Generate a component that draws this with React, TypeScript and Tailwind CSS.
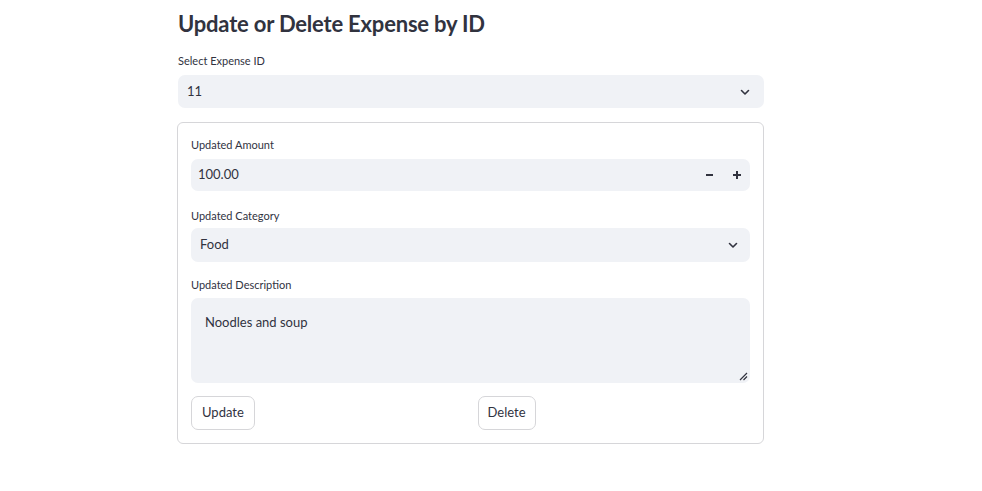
import React from "react";

const Chevron = () => (
  <svg width="12" height="12" viewBox="0 0 24 24" fill="none" stroke="#31333F" strokeWidth="3.2" strokeLinecap="round" strokeLinejoin="round">
    <path d="M5 9l7 7 7-7" />
  </svg>
);

export default function App() {
  return (
    <div className="w-[982px] h-[491px] bg-white text-[#31333F]" style={{ fontFamily: "Lato, 'Noto Sans', sans-serif" }}>
      <div className="ml-[178px] w-[586px] pt-[10px]">
        <h3 className="text-[22px] font-bold leading-[28px] tracking-[-0.2px]">Update or Delete Expense by ID</h3>
        <div className="mt-[16px] text-[11px] leading-[14px]">Select Expense ID</div>
        <div className="mt-[7px] h-[33px] rounded-[7px] bg-[#f0f2f6] flex items-center justify-between pl-[9px] pr-[13px] text-[13px]">
          <span>11</span>
          <Chevron />
        </div>
        <div className="mt-[14px] border border-[#d6d6d9] rounded-[6px] px-[13px] pt-[15px] pb-[13px] -ml-px">
          <div className="text-[11px] leading-[14px]">Updated Amount</div>
          <div className="mt-[7px] h-[32px] rounded-[7px] bg-[#f0f2f6] flex items-center justify-between pl-[7px] text-[13px]">
            <span>100.00</span>
            <div className="flex items-center h-full">
              <div className="w-[27px] h-full flex items-center justify-center">
                <div className="w-[7px] h-[2px] bg-[#31333F]" />
              </div>
              <div className="w-[27px] h-full flex items-center justify-center relative">
                <div className="w-[8px] h-[2px] bg-[#31333F]" />
                <div className="w-[2px] h-[8px] bg-[#31333F] absolute" />
              </div>
            </div>
          </div>
          <div className="mt-[18px] text-[11px] leading-[14px]">Updated Category</div>
          <div className="mt-[5px] h-[34px] rounded-[7px] bg-[#f0f2f6] flex items-center justify-between pl-[9px] pr-[11px] text-[13px]">
            <span>Food</span>
            <Chevron />
          </div>
          <div className="mt-[16px] text-[11px] leading-[14px]">Updated Description</div>
          <div className="mt-[6px] h-[85px] rounded-[7px] bg-[#f0f2f6] relative px-[14px] pt-[15px] text-[13px] leading-[18px]">
            <span>Noodles and soup</span>
            <svg className="absolute right-[2px] bottom-[2px]" width="9" height="9" viewBox="0 0 9 9" stroke="#31333F" strokeWidth="1.2">
              <path d="M1 8L8 1M4.5 8L8 4.5" />
            </svg>
          </div>
          <div className="mt-[13px] grid grid-cols-2 gap-[14px]">
            <div>
              <button className="h-[34px] px-[10px] border border-[#d6d6d9] rounded-[7px] bg-white text-[13px]">Update</button>
            </div>
            <div>
              <button className="h-[34px] px-[9px] border border-[#d6d6d9] rounded-[7px] bg-white text-[13px]">Delete</button>
            </div>
          </div>
        </div>
      </div>
    </div>
  );
}
